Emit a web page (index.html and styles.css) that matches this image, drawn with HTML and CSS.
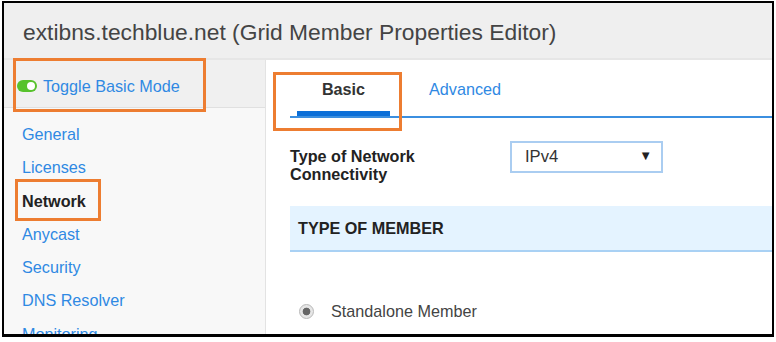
FILE: index.html
```html
<!DOCTYPE html>
<html lang="en">
<head>
    <meta charset="UTF-8">
    <title>Grid Member Properties Editor</title>
    <link rel="stylesheet" href="styles.css">
</head>
<body>
    <div class="window">
        <header class="title-bar">
            <h1>extibns.techblue.net (Grid Member Properties Editor)</h1>
        </header>

        <div class="editor">
            <aside class="sidebar">
                <div class="mode-toggle">
                    <span class="switch"></span>
                    <a href="#">Toggle Basic Mode</a>
                </div>
                <nav class="menu">
                    <a href="#">General</a>
                    <a href="#">Licenses</a>
                    <a href="#" class="active">Network</a>
                    <a href="#">Anycast</a>
                    <a href="#">Security</a>
                    <a href="#">DNS Resolver</a>
                    <a href="#">Monitoring</a>
                </nav>
            </aside>

            <main class="content">
                <div class="tabs">
                    <div class="tab active">Basic</div>
                    <div class="tab">Advanced</div>
                </div>

                <div class="form-row">
                    <label class="field-label">Type of Network Connectivity</label>
                    <div class="select-box">
                        <span>IPv4</span>
                        <span class="arrow">▼</span>
                    </div>
                </div>

                <div class="section-head">TYPE OF MEMBER</div>

                <div class="radio-row">
                    <span class="radio"></span>
                    <span>Standalone Member</span>
                </div>
            </main>
        </div>
    </div>

    <!-- callout boxes drawn over the screenshot -->
    <div class="callout callout-toggle"></div>
    <div class="callout callout-network"></div>
    <div class="callout callout-tab"></div>
</body>
</html>
```

FILE: styles.css
```css
:root {
    --link: #2f89e3;
    --text: #333;
    --callout: #ed7d31;
    --tab-line: #3b8fe0;
}

* {
    margin: 0;
    padding: 0;
    box-sizing: border-box;
    font-family: 'Liberation Sans', Arial, sans-serif;
}

body {
    position: relative;
    width: 776px;
    height: 342px;
    background: #fff;
    overflow: hidden;
    font-size: 16.2px;
    color: var(--text);
}

a {
    color: var(--link);
    text-decoration: none;
}

.window {
    margin: 1px 0 0 2px;
    width: 772px;
    height: 336px;
    border: 2px solid #000;
    border-bottom-width: 3px;
    overflow: hidden;
    display: flex;
    flex-direction: column;
}

.title-bar {
    height: 57px;
    background: #efefef;
    border-bottom: 2px solid #e6e6e6;
    padding-left: 19px;
    display: flex;
    align-items: center;
}

h1 {
    font-size: 22.8px;
    font-weight: 400;
    color: #444;
    padding-top: 4px;
}

.editor {
    flex: 1;
    display: flex;
    min-height: 0;
}

.sidebar {
    width: 262px;
    background: #f8f8f8;
    border-right: 1px solid #e3e3e3;
    flex-shrink: 0;
}

.mode-toggle {
    height: 48px;
    background: #f0f0f0;
    border-bottom: 1px solid #e0e0e0;
    display: flex;
    align-items: center;
    padding: 5px 0 0 13px;
}

.switch {
    width: 20px;
    height: 12px;
    border-radius: 6px;
    background: #57c22c;
    position: relative;
    margin-right: 6px;
}

.switch::after {
    content: '';
    position: absolute;
    right: 2px;
    top: 2px;
    width: 8px;
    height: 8px;
    border-radius: 50%;
    background: #fff;
}

.menu {
    padding: 10px 0 0 18px;
}

.menu a {
    display: block;
    line-height: 33.3px;
}

.menu a.active {
    color: #222;
    font-weight: 700;
}

.content {
    flex: 1;
    background: #fff;
    padding-left: 24px;
}

.tabs {
    display: flex;
    border-bottom: 2px solid var(--tab-line);
}

.tab {
    padding: 19px 0 17px;
    line-height: 20px;
    color: var(--link);
}

.tab.active {
    width: 93px;
    margin-left: 7px;
    text-align: center;
    font-weight: 700;
    color: #333;
    border-bottom: 5px solid #0b6fd8;
    padding-bottom: 12px;
}

.tab + .tab {
    margin-left: 39px;
}

.form-row {
    display: flex;
    align-items: flex-start;
}

.field-label {
    width: 220px;
    padding-top: 29px;
    line-height: 18px;
    font-weight: 700;
    color: #222;
}

.select-box {
    margin-top: 23px;
    width: 153px;
    height: 32px;
    border: 2px solid #aacdf1;
    display: flex;
    align-items: center;
    justify-content: space-between;
    padding: 0 9px 0 13px;
    font-size: 16.6px;
}

.arrow {
    font-size: 13px;
    color: #222;
    padding-bottom: 4px;
}

.section-head {
    margin-top: 23px;
    height: 46px;
    background: #e4f3ff;
    border-bottom: 2px solid #a9d1f4;
    padding-left: 8px;
    display: flex;
    align-items: center;
    font-weight: 700;
    color: #222;
}

.radio-row {
    margin-top: 50px;
    display: flex;
    align-items: center;
    padding-left: 9px;
    color: #444;
}

.radio {
    width: 15px;
    height: 15px;
    border-radius: 50%;
    border: 1px solid #b8b8b8;
    background: radial-gradient(circle, #666 0 3.5px, #e6e6e6 4.2px);
    margin-right: 17px;
}

.callout {
    position: absolute;
    border: 3px solid var(--callout);
}

.callout-toggle {
    left: 13px;
    top: 58px;
    width: 193px;
    height: 54px;
}

.callout-network {
    left: 15px;
    top: 179px;
    width: 86px;
    height: 42px;
}

.callout-tab {
    left: 273px;
    top: 72px;
    width: 129px;
    height: 59px;
}
```
